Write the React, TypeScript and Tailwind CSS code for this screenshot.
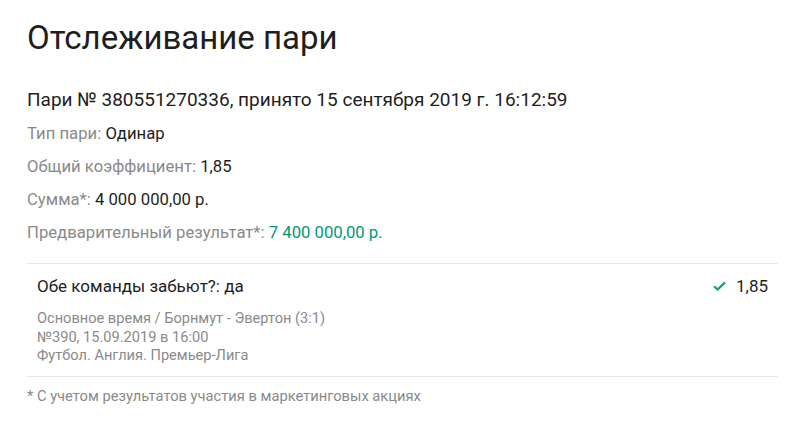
type Row = { label: string; value: string; green?: boolean };

const rows: Row[] = [
  { label: 'Тип пари:', value: 'Одинар' },
  { label: 'Общий коэффициент:', value: '1,85' },
  { label: 'Сумма*:', value: '4 000 000,00 р.' },
  { label: 'Предварительный результат*:', value: '7 400 000,00 р.', green: true },
];

function CheckIcon() {
  return (
    <svg width="13" height="10" viewBox="0 0 13 10" fill="none">
      <path d="M1 5.2 L4.6 8.6 L12 1.4" stroke="#14a37a" strokeWidth="2.2" />
    </svg>
  );
}

export default function App() {
  return (
    <div className="w-[800px] h-[437px] bg-white text-[#1e1e1e] pl-[27px] pr-[22px] pt-[18px] font-['Roboto',sans-serif]">
      <h1 className="text-[33px] leading-[40px] font-normal">Отслеживание пари</h1>
      <p className="mt-[30px] text-[19px] leading-[24px]">
        Пари № 380551270336, принято 15 сентября 2019 г. 16:12:59
      </p>

      <div className="mt-[5px] flex flex-col">
        {rows.map((r) => (
          <div key={r.label} className="h-[33px] flex items-center text-[16.7px] whitespace-pre">
            <span className="text-[#8a8a8a]">{r.label} </span>
            <span className={r.green ? 'text-[#00987a]' : 'text-[#1e1e1e]'}>{r.value}</span>
          </div>
        ))}
      </div>

      <div className="mt-[14px] border-y border-[#e6e6e6] px-[10px] pt-[11px] pb-[11px]">
        <div className="flex items-center justify-between">
          <span className="text-[17px] leading-[22px]">Обе команды забьют?: да</span>
          <span className="flex items-center gap-[10px] text-[17px] leading-[22px]">
            <CheckIcon />
            1,85
          </span>
        </div>
        <div className="mt-[12px] text-[14.6px] leading-[18.5px] text-[#8a8a8a]">
          <div>Основное время / Борнмут - Эвертон (3:1)</div>
          <div>№390, 15.09.2019 в 16:00</div>
          <div>Футбол. Англия. Премьер-Лига</div>
        </div>
      </div>

      <p className="mt-[9px] text-[14.7px] leading-[20px] text-[#8a8a8a]">
        * С учетом результатов участия в маркетинговых акциях
      </p>
    </div>
  );
}
